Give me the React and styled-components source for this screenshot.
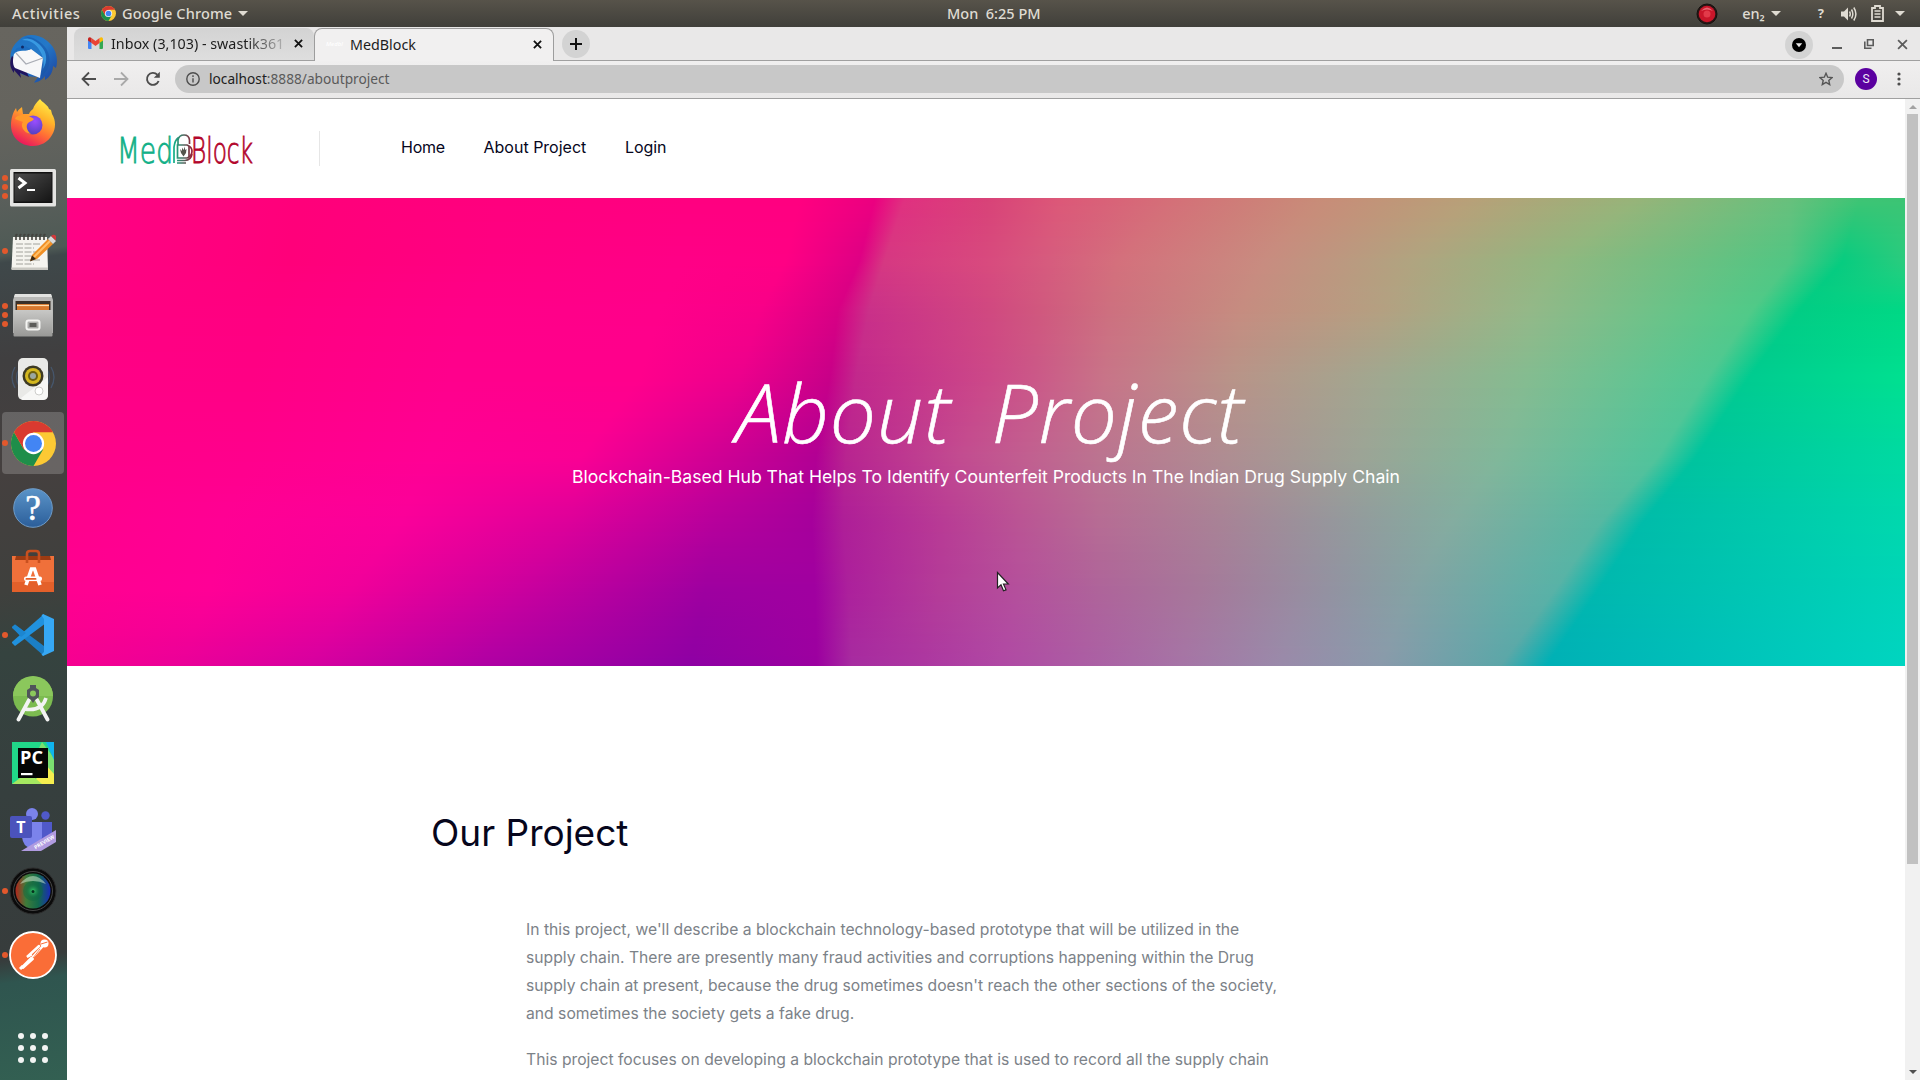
import React from "react";
import styled, { createGlobalStyle } from "styled-components";

const GlobalStyle = createGlobalStyle`
  *, *::before, *::after { box-sizing: border-box; }
  html, body { margin: 0; padding: 0; overflow: hidden; }
  svg { display: block; flex: none; }
`;

const systemFont = `"Noto Sans", "Open Sans", sans-serif`;
const siteFont = `Inter, Roboto, "Liberation Sans", sans-serif`;

/* ---------- desktop ---------- */

const Desktop = styled.div`
  width: 1920px;
  height: 1080px;
  overflow: hidden;
  display: flex;
  flex-direction: column;
  font-family: ${systemFont};
  background: #fff;
`;

const TopBar = styled.header`
  flex: none;
  height: 27px;
  display: grid;
  grid-template-columns: 947px 1fr auto;
  align-items: center;
  background: linear-gradient(#57534a, #403f3a);
  color: #dfdbd2;
  font-size: 14.5px;
  font-weight: 500;
  line-height: 27px;
  white-space: pre;
`;

const TopLeft = styled.div`
  display: flex;
  align-items: center;
  padding-left: 12px;
`;

const Activities = styled.span`
  width: 89px;
  letter-spacing: 0.6px;
`;

const AppName = styled.span`
  margin: 0 6px 0 6px;
  letter-spacing: 0.15px;
`;

const TopRight = styled.div`
  display: flex;
  align-items: center;
  padding-right: 15px;
`;

const Language = styled.span`
  margin: 0 6px 0 24px;
`;

const HelpMark = styled.span`
  margin: 0 17px 0 37px;
  font-size: 13px;
  font-weight: 700;
`;

const Caret = styled.span`
  width: 0;
  height: 0;
  border: 5px solid transparent;
  border-top-color: #dfdbd2;
  border-bottom: 0;
`;

const Gap = styled.span`
  width: ${(p) => p.$w}px;
`;

const Workspace = styled.div`
  flex: 1;
  min-height: 0;
  display: flex;
`;

/* ---------- dock ---------- */

const DockBar = styled.nav`
  flex: none;
  width: 67px;
  display: flex;
  flex-direction: column;
  background: linear-gradient(
    172deg,
    #67655f 0,
    #65645e 90px,
    #5a5f5b 170px,
    #4e5a55 226px,
    #3f484a 234px,
    #403f40 330px,
    #45403f 440px,
    #3f403d 560px,
    #35433f 620px,
    #363f3e 760px,
    #373c3c 925px,
    #2f554f 948px,
    #336052 1053px
  );
`;

const DockSlot = styled.div`
  flex: none;
  height: 64px;
  display: grid;
  grid-template-columns: 11px 44px;
  align-items: center;
`;

const DockTile = styled.div`
  width: 62px;
  height: 62px;
  margin-left: -9px;
  padding-top: ${(p) => p.$drop || 0}px;
  display: grid;
  place-items: center;
  border-radius: 4px;
  background: ${(p) => (p.$active ? "rgba(255,255,255,0.19)" : "none")};
`;

const Dots = styled.div`
  display: flex;
  flex-direction: column;
  align-items: center;
  gap: 2.6px;
  width: 10px;
  z-index: 1;
`;

const Dot = styled.i`
  width: 6px;
  height: 6px;
  border-radius: 50%;
  background: #e2582c;
`;

const AppGrid = styled.div`
  display: grid;
  grid-template-columns: repeat(3, 6px);
  gap: 6px;
  padding: 45.5px 0 0 18px;
`;

const GridDot = styled.i`
  width: 6px;
  height: 6px;
  border-radius: 50%;
  background: #f2f4f3;
`;

/* ---------- browser window ---------- */

const Browser = styled.section`
  flex: 1;
  min-width: 0;
  display: flex;
  flex-direction: column;
`;

const TabStrip = styled.div`
  flex: none;
  height: 34px;
  display: flex;
  align-items: stretch;
  padding: 1px 12px 0 7px;
  background: #e9e8e8;
  border-bottom: 1px solid #a0a0a0;
  color: #1d1d1d;
`;

const Tab = styled.div`
  width: ${(p) => p.$w}px;
  height: ${(p) => (p.$active ? 33 : 32)}px;
  display: flex;
  align-items: center;
  padding: 0 ${(p) => (p.$active ? 11 : 11)}px 2px ${(p) => (p.$active ? 11 : 14)}px;
  border-radius: 8px 8px 0 0;
  background: ${(p) => (p.$active ? "#f1f0f0" : "linear-gradient(#d3d3d3, #dedede)")};
  border: ${(p) => (p.$active ? "1px solid #9d9d9d" : "0 solid")};
  border-bottom: 0;
  font-size: 14.3px;
`;

const TabTitle = styled.span`
  flex: 1;
  min-width: 0;
  overflow: hidden;
  white-space: nowrap;
  padding-left: ${(p) => p.$indent}px;
  ${(p) => p.$fade && "mask-image: linear-gradient(90deg, #000 78%, rgba(0,0,0,.2) 99%);"}
`;

const FavText = styled.span`
  width: 14px;
  font: italic 500 6px ${systemFont};
  color: #fff;
`;

const RoundButton = styled.span`
  width: ${(p) => p.$size}px;
  height: ${(p) => p.$size}px;
  border-radius: 50%;
  background: #d3d3d3;
  display: grid;
  place-items: center;
  margin: 2px 0 0 ${(p) => p.$left}px;
`;

const WindowControls = styled.div`
  margin-left: auto;
  display: flex;
  align-items: center;
`;

const Toolbar = styled.div`
  flex: none;
  height: 38px;
  display: flex;
  align-items: center;
  padding: 0 16px 1px 14px;
  background: linear-gradient(#f0efef, #e9e8e8);
  border-bottom: 1px solid #a0a0a0;
`;

const Omnibox = styled.div`
  flex: 1;
  height: 28px;
  margin-left: 14px;
  display: flex;
  align-items: center;
  padding: 0 11px;
  border-radius: 14px;
  background: #c8c8c8;
`;

const Url = styled.span`
  flex: 1;
  padding-left: 9px;
  font-size: 13.7px;
  line-height: 26px;
  color: #5a5a5a;

  b { font-weight: 400; color: #202020; }
`;

const Avatar = styled.span`
  width: 22px;
  height: 22px;
  margin: 0 20px 0 11px;
  border-radius: 50%;
  background: #5b00a0;
  color: #f0e6f8;
  display: grid;
  place-items: center;
  font: 400 12px Roboto, sans-serif;
`;

const Viewport = styled.div`
  flex: 1;
  min-height: 0;
  display: flex;
`;

const Page = styled.main`
  width: 1838px;
  overflow: hidden;
  display: flex;
  flex-direction: column;
  background: #fff;
  font-family: ${siteFont};
`;

const ScrollTrack = styled.div`
  width: 15px;
  display: flex;
  flex-direction: column;
  align-items: center;
  justify-content: space-between;
  background: #f1f1f1;
  padding: 6px 0 6px;
`;

const ScrollTop = styled.div`
  display: flex;
  flex-direction: column;
  align-items: center;
  gap: 5px;
`;

const ScrollArrow = styled.i`
  border: 4px solid transparent;
  ${(p) => (p.$down ? "border-top-color: #505050; border-bottom: 0;" : "border-bottom-color: #a3a3a3; border-top: 0;")}
`;

const ScrollThumb = styled.div`
  width: 11px;
  height: 750px;
  background: #c1c1c1;
`;

/* ---------- site ---------- */

const SiteHeader = styled.div`
  flex: none;
  height: 99px;
  display: flex;
  align-items: center;
  padding: 0 0 2px 53px;
`;

const Divider = styled.i`
  width: 1px;
  height: 35px;
  margin: 2px 81px 0 66px;
  background: #e6e6e6;
`;

const NavLinks = styled.div`
  display: flex;
  gap: 38.7px;
  padding-bottom: 2px;
  font-size: 16px;
  line-height: 24px;
  color: #06061c;
`;

const NavLink = styled.a`
  letter-spacing: ${(p) => p.$track}px;
`;

const Hero = styled.div`
  flex: none;
  height: 468px;
  display: grid;
  grid-template: 468px / 1838px;

  & > * { grid-area: 1 / 1; }
`;

const HeroCopy = styled.div`
  display: flex;
  flex-direction: column;
  align-items: center;
  padding-top: 163px;
  color: #fff;
  z-index: 1;
`;

const HeroTitle = styled.h1`
  margin: 0;
  padding-left: 8px;
  font: italic 300 82px/100px "Open Sans", Lato, sans-serif;
  word-spacing: 18px;
  letter-spacing: 1px;
  -webkit-text-stroke: 0.6px #fff;
`;

const HeroText = styled.p`
  margin: 2px 0 0;
  font-size: 17.6px;
  line-height: 28px;
`;

const Content = styled.div`
  padding: 140px 0 0 364px;
`;

const SectionTitle = styled.h2`
  margin: 0 0 56px;
  font-size: 37px;
  font-weight: 400;
  line-height: 54px;
  color: #06061c;
`;

const Paragraph = styled.p`
  margin: 0 0 18px 95px;
  font-size: 15.7px;
  line-height: 28px;
  color: #7c8288;
`;

const Line = styled.span`
  display: block;
  white-space: nowrap;
`;

const Pointer = styled.svg`
  position: absolute;
  left: 996px;
  top: 571px;
`;

/* ---------- hero artwork: colour mesh, one row of control points per height ---------- */

const mesh = [
  [198, "67 ff0084,300 ff007a,500 ff007e,690 ff0080,800 ff0080,875 ec0080,905 e03080,987 d84278,1060 dc5878,1176 d47078,1320 c88c78,1470 b8a078,1640 96b479,1790 68c07c,1860 40c474,1905 3cc474"],
  [262, "67 ff0084,290 ff007a,490 ff0082,680 ff0086,785 ff0084,859 de0084,884 d63882,987 d84a7e,1050 d65c7e,1117 d4707c,1264 c88c80,1411 b0a480,1558 90b880,1790 50c683,1842 06cc80,1905 2acc7e"],
  [310, "67 ff0082,270 ff0080,470 ff0088,660 ff008a,760 f80088,838 d80084,869 ca3089,987 d04880,1040 d0587e,1110 cd707f,1240 c68c80,1381 b4a081,1528 94b888,1752 50ca88,1799 02cd84,1905 00d885"],
  [377, "67 ff0086,250 ff0084,450 ff008c,640 ff008c,740 ec008c,830 c80088,856 c2288c,987 cc4888,1035 cb5888,1105 c87488,1235 b89488,1381 a0a890,1528 84bc90,1708 50c893,1749 00cc90,1905 00e090"],
  [457, "67 ff0088,250 ff008c,430 ff0094,580 fa0094,715 d00094,816 b20094,846 b82490,960 c24c90,1030 c16090,1100 bb7490,1230 ae8e92,1360 9ca496,1500 80b89a,1658 50c49b,1696 00c49e,1905 00daa2"],
  [523, "67 ff008c,220 ff0094,400 fa009a,570 dc009a,715 b6009c,812 a6009c,843 ae1e98,940 b83a95,1020 ba5494,1100 b66c94,1220 a88296,1330 96969c,1450 84aca0,1600 56b8a2,1642 00bcaa,1905 00d8ae"],
  [590, "67 ff0090,210 ff0096,350 f0009a,520 ca009e,705 9e00a0,815 a000a0,848 ac209c,940 b43c98,1020 b4509c,1100 ae649a,1200 a6789a,1300 988ca0,1411 84a2a4,1555 58b2a7,1598 00b8af,1905 00d5b8"],
  [666, "67 f60090,180 ea0098,310 d600a0,480 b000a4,690 8e00a4,817 9c00a0,852 a72ca0,920 ac36a1,1000 b048a4,1080 ac5ca4,1180 a674a6,1280 9a8aaa,1380 8a9aab,1500 5ca6a8,1546 00b0b6,1905 00d5c0"],
].map(([y, row]) => ({
  y: y - 198,
  points: row.split(",").map((s) => {
    const [x, hex] = s.split(" ");
    return { x: +x - 67, c: [0, 2, 4].map((i) => parseInt(hex.slice(i, i + 2), 16)) };
  }),
}));

const STRIP = 2;
const mix = (a, b, t) => a + (b - a) * t;

const strips = Array.from({ length: 468 / STRIP }, (_, n) => {
  const y = n * STRIP;
  const mid = y + STRIP / 2;
  const i = Math.max(1, mesh.findIndex((r) => r.y >= mid));
  const a = mesh[i - 1];
  const b = mesh[i];
  const t = (mid - a.y) / (b.y - a.y);
  return {
    y,
    stops: a.points.map((p, k) => ({
      at: mix(p.x, b.points[k].x, t) / 1838,
      color: `rgb(${p.c.map((v, j) => Math.round(mix(v, b.points[k].c[j], t))).join(",")})`,
    })),
  };
});

const HeroArt = () => (
  <svg width="1838" height="468" viewBox="0 0 1838 468" shapeRendering="crispEdges">
    <defs>
      {strips.map((s) => (
        <linearGradient id={`strip${s.y}`} key={s.y}>
          {s.stops.map((p, k) => (
            <stop key={k} offset={p.at} stopColor={p.color} />
          ))}
        </linearGradient>
      ))}
    </defs>
    {strips.map((s) => (
      <rect key={s.y} y={s.y} width="1838" height={STRIP} fill={`url(#strip${s.y})`} />
    ))}
  </svg>
);

/* ---------- icons ---------- */

const ChromeIcon = ({ size }) => (
  <svg width={size} height={size} viewBox="0 0 44 44">
    <circle cx="22" cy="22" r="22" fill="#fcc934" />
    <path d="M2.95 11 A22 22 0 0 0 22 44 L31.5 27.5 L12.5 27.5 Z" fill="#1e8e4a" />
    <path d="M2.95 11 A22 22 0 0 1 41.05 11 H22 L12.5 27.5 Z" fill="#d93a30" />
    <circle cx="22" cy="22" r="10.4" fill="#fff" />
    <circle cx="22" cy="22" r="8.3" fill="#4285f4" />
  </svg>
);

const Thunderbird = () => (
  <svg width="48" height="50" viewBox="0 0 48 50">
    <defs>
      <linearGradient id="tb" x1="0" y1="0" x2="1" y2="1">
        <stop offset="0" stopColor="#1d72c4" />
        <stop offset=".5" stopColor="#2478c8" />
        <stop offset="1" stopColor="#1a3f9c" />
      </linearGradient>
    </defs>
    <path d="M10 6 C16 -1 29 0 37 6 C46 12 50 24 47 34 L44 32 C44 38 41 43 36 46 L36 42 C33 46 29 48.500 25 48.500 L29 43 C18 43 6 40 3 30 C-1 21 3 12 10 6Z" fill="url(#tb)" />
    <path d="M3 22 C0 28 1 34 5 39 L5 36 L12 44 L11 39 L20 43 L14 30Z" fill="#20145e" />
    <path d="M5 20 C9 15 18 18 22 15 L34 24 L31 44 L6 34 C3 30 4 24 5 20Z" fill="#f7f7f8" />
    <path d="M7 19 L17 30 L34 24" fill="none" stroke="#a9acb4" strokeWidth="1.2" />
    <path d="M15 3 C22 4 29 9 32 16 C36 25 35 36 31 43 C41 37 44 24 36 13 C30 6 22 2 15 3Z" fill="#1556a8" opacity=".55" />
    <path d="M13 6 C20 6 27 9 31 17 C35 24 35 30 34 35 C39 27 38 18 32 12 C26 6 20 3 13 6Z" fill="#3fa4ea" opacity=".8" />
    <path d="M4 19 C8 17 9 15 13 16 C17 17 20 16 22 15 L16 12 L8 14Z" fill="#1d6dc0" />
    <circle cx="13.5" cy="13" r="1.5" fill="#102a66" />
  </svg>
);

const Firefox = () => (
  <svg width="46" height="48" viewBox="0 0 46 48">
    <defs>
      <linearGradient id="ff" x1=".8" y1="0" x2=".3" y2="1">
        <stop offset="0" stopColor="#fff14a" />
        <stop offset=".35" stopColor="#ffb52a" />
        <stop offset=".65" stopColor="#ff6a36" />
        <stop offset="1" stopColor="#e8145f" />
      </linearGradient>
      <radialGradient id="ffp" cx=".6" cy=".3" r=".8">
        <stop offset="0" stopColor="#9a4dff" />
        <stop offset="1" stopColor="#4a3fb8" />
      </radialGradient>
    </defs>
    <path d="M30 0 C33 4 38 6 39 10 L41 11 L42 15 C46 21 46 30 42 36 C38 43 31 47 23 47 C10 47 1 38 1 26 C1 20 3 13 6 9 L7 13 C9 10 11 9 12 8 L13 15 C15 15 17 15 19 15 C20 12 22 11 23 10 C24 6 27 3 30 0Z" fill="url(#ff)" />
    <circle cx="23" cy="26" r="9.5" fill="url(#ffp)" />
    <path d="M6 18 C12 14 18 16 24 20 C22 22.500 20 22 18 24 C16 26 16 31 21 35 C13 34 10 26 13 23 L5 20Z" fill="#ff9a2a" />
  </svg>
);

const Terminal = () => (
  <svg width="46" height="38" viewBox="0 0 46 38">
    <defs>
      <linearGradient id="term" x1="0" y1="0" x2="1" y2="1">
        <stop offset="0" stopColor="#4c4c4c" />
        <stop offset="1" stopColor="#151515" />
      </linearGradient>
    </defs>
    <rect width="46" height="37.5" rx="1.5" fill="#e4e4e2" />
    <rect x="3.5" y="3" width="39" height="31" fill="#111" />
    <rect x="4.5" y="4.5" width="37" height="28" fill="url(#term)" />
    <path d="M8.5 9 L15 14 L8.5 19" fill="none" stroke="#fff" strokeWidth="3" />
    <path d="M17 21 H25" stroke="#fff" strokeWidth="2" />
  </svg>
);

const Notes = () => (
  <svg width="46" height="40" viewBox="0 0 46 40">
    <path d="M3 6 H37 L38 38 H1.5Z" fill="#f5f4ef" />
    <path d="M1.5 36.5 H38 V39 H1.5Z" fill="#c9c8c2" />
    {[6, 10, 14, 18, 22, 26, 30, 34].map((x) => (
      <path key={x} d={`M${x} 9 V4.5 Q${x} 3 ${x + 1.5} 4`} stroke="#44443f" strokeWidth="1.6" fill="none" />
    ))}
    {[13, 17, 21, 25, 29, 33].map((y) => (
      <path key={y} d={`M6 ${y} H${y % 8 === 5 ? 30 : 24}`} stroke="#a2a29c" strokeWidth="1" strokeDasharray="7 1.5" />
    ))}
    <path d="M20 30 L22 24 L38 8 L43 13 L27 28Z" fill="#f08f25" />
    <path d="M24 26 L40 10" stroke="#ffc069" strokeWidth="2" />
    <path d="M38 8 L41 5 L46 10 L43 13Z" fill="#d9d9d9" />
    <path d="M41 5 Q44 2.5 46 5 V9.5Z" fill="#d3393b" />
    <path d="M20 30.500 L22 24.500 L26 28Z" fill="#3b2a18" />
  </svg>
);

const Files = () => (
  <svg width="42" height="44" viewBox="0 0 42 44">
    <defs>
      <linearGradient id="cab" x1="0" y1="0" x2="0" y2="1">
        <stop offset="0" stopColor="#c8c8c6" />
        <stop offset="1" stopColor="#989896" />
      </linearGradient>
    </defs>
    <path d="M3 1 H39 L41 7 V40 H1 V7Z" fill="#b8b8b6" />
    <path d="M3 1 H39 L40 4 H2Z" fill="#e2e2e0" />
    <rect x="3.500" y="8" width="35" height="11" fill="#3a3028" />
    <rect x="5" y="11" width="32" height="6" fill="#d9782d" />
    <path d="M5 12.500 H37" stroke="#ffdcae" strokeWidth="1.200" />
    <rect x="1.500" y="17" width="39" height="26.500" rx="1" fill="url(#cab)" />
    <rect x="14.500" y="27.500" width="13" height="9" rx="2" fill="none" stroke="#f4f4f2" strokeWidth="2" />
    <rect x="17.500" y="30" width="7" height="4" fill="#5c5c5a" />
  </svg>
);

const Speaker = () => (
  <svg width="46" height="44" viewBox="0 0 46 44">
    <path d="M5 10 Q-1 20 5 31 M9 12 Q4 20 9 29 M41 10 Q47 20 41 31 M37 12 Q42 20 37 29" stroke="#46566b" strokeWidth="1.300" fill="none" />
    <rect x="8" y="1" width="30" height="42" rx="5" fill="#e9e9e7" />
    <path d="M11 41 L38 20 V38 Q38 43 33 43 H12Z" fill="#fafafa" opacity=".8" />
    <circle cx="23" cy="19" r="10.500" fill="#3d3a24" />
    <circle cx="23" cy="19" r="8" fill="#d3b71f" />
    <circle cx="23" cy="19" r="5" fill="#6d6011" />
    <circle cx="23" cy="19" r="3" fill="#9ba7a0" />
    <circle cx="29" cy="34" r="4" fill="#fff" stroke="#cdcdcb" />
  </svg>
);

const HelpIcon = () => (
  <svg width="40" height="40" viewBox="0 0 40 40">
    <defs>
      <linearGradient id="hlp" x1="0" y1="0" x2="0" y2="1">
        <stop offset="0" stopColor="#5b94c8" />
        <stop offset="1" stopColor="#2b5e9a" />
      </linearGradient>
    </defs>
    <circle cx="20" cy="20" r="19.300" fill="url(#hlp)" stroke="#6f9cc8" />
    <text x="20" y="32" textAnchor="middle" fontFamily="Liberation Serif, serif" fontSize="35" fill="#fff" stroke="#fff" strokeWidth=".6">?</text>
  </svg>
);

const Software = () => (
  <svg width="42" height="44" viewBox="0 0 42 44">
    <path d="M3 7 H39 V12 H3Z" fill="#9c3b12" />
    <path d="M0 7 L4 7 L3 11 H39 L38 7 H42 V43 H0Z" fill="#f0703a" />
    <path d="M0 33 H42 V43 H0Z" fill="#e4602a" />
    <path d="M15 14 V5 Q15 2 18 2 H24 Q27 2 27 5 V14" fill="none" stroke="#c9501f" strokeWidth="2.600" />
    <path d="M14 36 L19.500 20 H22.500 L28 36" fill="none" stroke="#fff" strokeWidth="3.600" />
    <rect x="12" y="27.500" width="18" height="4.600" rx="2" fill="#fff" />
    <rect x="13.500" y="29" width="11" height="1.800" rx=".9" fill="#e4602a" />
  </svg>
);

const VSCode = () => (
  <svg width="42" height="42" viewBox="0 0 42 42">
    <path d="M0 13 L3 10.500 L32 32 V42 L0 14Z" fill="#1b7fc6" />
    <path d="M0 29 L3 32 L32 10.500 V0 L0 28Z" fill="#2192de" />
    <path d="M0 13 L3 10.500 L14 19 L9 23Z" fill="#1c86d0" />
    <path d="M31 0 L42 5 V37 L31 42 L29.500 40.500 L32 38 V5 L29.500 1.500Z" fill="#36a8f4" />
  </svg>
);

const AndroidStudio = () => (
  <svg width="42" height="46" viewBox="0 0 42 46">
    <circle cx="21" cy="20.500" r="20" fill="#7cbb50" />
    <path d="M1 20 A20 20 0 0 1 41 20Z" fill="#8bc75c" />
    <path d="M17 24 L6.500 43.500 M25 24 L35.500 43.500" stroke="#f3f3f3" strokeWidth="3.800" strokeLinecap="round" />
    <path d="M12 33 Q30 36 34 22" stroke="#f3f3f3" strokeWidth="3.600" fill="none" />
    <path d="M18 9 H24 V12 L27 14 V21 L23 24 L21 27 L19 24 L15 21 V14 L18 12Z" fill="#50545a" />
    <circle cx="21" cy="17.500" r="3" fill="#8bc75c" />
  </svg>
);

const PyCharm = () => (
  <svg width="42" height="42" viewBox="0 0 42 42">
    <rect width="42" height="42" fill="#21d789" />
    <path d="M20 42 L42 14 V42Z" fill="#f6ee4f" />
    <path d="M0 42 L16 30 L30 42Z" fill="#a5e861" />
    <path d="M30 0 L42 16 V32 L24 12Z" fill="#7be070" />
    <path d="M34 0 H42 V18Z" fill="#0fb4ee" />
    <rect x="6" y="6" width="30" height="30" fill="#050505" />
    <text x="8" y="22" fontFamily="Open Sans, sans-serif" fontWeight="700" fontSize="17" textLength="23" lengthAdjust="spacingAndGlyphs" fill="#fff">PC</text>
    <rect x="9" y="31" width="11.500" height="2.200" fill="#fff" />
  </svg>
);

const Teams = () => (
  <svg width="46" height="44" viewBox="0 0 46 44">
    <circle cx="22" cy="7" r="6" fill="#7b83eb" />
    <circle cx="35.500" cy="8.500" r="4.200" fill="#5059c9" />
    <path d="M28 15 H42 V28 Q42 36 33 36 H28Z" fill="#5059c9" />
    <path d="M12 15 H32 V30 Q31 41 21 41 Q13 40 12 30Z" fill="#7b83eb" />
    <rect y="9" width="22" height="22" rx="2" fill="#4b53bc" />
    <text x="11" y="26" textAnchor="middle" fontFamily="Open Sans, sans-serif" fontWeight="700" fontSize="16" fill="#fff">T</text>
    <path d="M11 44 L46 23 V35 L31 44Z" fill="#b09be0" />
    <text transform="translate(25.500 42.500) rotate(-31)" fontFamily="Open Sans, sans-serif" fontWeight="700" fontSize="5.200" fill="#fff">PREVIEW</text>
  </svg>
);

const Webcam = () => (
  <svg width="48" height="48" viewBox="0 0 48 48">
    <defs>
      <linearGradient id="lens" x1="0" y1=".5" x2="1" y2=".5">
        <stop offset="0" stopColor="#b3261c" />
        <stop offset=".3" stopColor="#3e7c3a" />
        <stop offset=".65" stopColor="#126a4c" />
        <stop offset="1" stopColor="#1a2bb8" />
      </linearGradient>
      <radialGradient id="lensGlow">
        <stop offset="0" stopColor="#37d06a" />
        <stop offset="1" stopColor="#0d6040" stopOpacity="0" />
      </radialGradient>
    </defs>
    <circle cx="24" cy="24" r="23" fill="#0b0b0b" stroke="#2b2b2b" />
    <circle cx="24" cy="24" r="19.500" fill="none" stroke="#464646" />
    <circle cx="24" cy="24" r="17.500" fill="url(#lens)" />
    <circle cx="24" cy="24" r="10" fill="#0c6a43" opacity=".45" />
    <circle cx="24" cy="24" r="8" fill="url(#lensGlow)" />
    <path d="M11 17 Q24 1 37 17 Q24 11 11 17Z" fill="#d8f0d8" opacity=".5" />
    <circle cx="24" cy="24.500" r="1.500" fill="#06301e" />
  </svg>
);

const Postman = () => (
  <svg width="48" height="48" viewBox="0 0 48 48">
    <circle cx="24" cy="24" r="23" fill="#fa6d37" stroke="#fff" strokeWidth="1.800" />
    <circle cx="35.500" cy="12.500" r="4" fill="#fff" />
    <path d="M32 13 L38.500 11" stroke="#fa6d37" strokeWidth="1" />
    <path d="M33 16 L21 29 M30 15 L18 26 L22 24" stroke="#fff" strokeWidth="2.400" fill="none" strokeLinecap="round" />
    <path d="M31 18 L24 27" stroke="#fa6d37" strokeWidth=".8" />
    <path d="M22 27 L12 37 M24 28 L14 37" stroke="#fff" strokeWidth="2" fill="none" strokeLinecap="round" />
    <path d="M14 35 L11 38" stroke="#fff" strokeWidth="3" />
  </svg>
);

const dockItems = [
  { icon: <Thunderbird />, dots: 0 },
  { icon: <Firefox />, dots: 0 },
  { icon: <Terminal />, dots: 3, drop: 2 },
  { icon: <Notes />, dots: 1 },
  { icon: <Files />, dots: 3 },
  { icon: <Speaker />, dots: 0 },
  { icon: <ChromeIcon size={45} />, dots: 1, active: true },
  { icon: <HelpIcon />, dots: 0, drop: 2 },
  { icon: <Software />, dots: 0 },
  { icon: <VSCode />, dots: 1 },
  { icon: <AndroidStudio />, dots: 0 },
  { icon: <PyCharm />, dots: 0 },
  { icon: <Teams />, dots: 0, drop: 4 },
  { icon: <Webcam />, dots: 1 },
  { icon: <Postman />, dots: 1 },
];

const Gmail = () => (
  <svg width="15" height="12" viewBox="0 0 15 12">
    <path d="M0 2 V11 Q0 12 1 12 H3.500 V4.500Z" fill="#4285f4" />
    <path d="M15 2 V11 Q15 12 14 12 H11.500 V4.500Z" fill="#34a853" />
    <path d="M11.500 1 L13 .2 Q15 0 15 2 V3.500 L11.500 6Z" fill="#fbbc04" />
    <path d="M3.500 1 L7.500 4 L11.500 1 V6 L7.500 9 L3.500 6Z" fill="#ea4335" />
    <path d="M3.500 1 L2 .2 Q0 0 0 2 V3.500 L3.500 6Z" fill="#c5221f" />
  </svg>
);

const Cross = ({ size, color, width = 2 }) => (
  <svg width={size} height={size} viewBox="0 0 10 10">
    <path d="M1 1 L9 9 M9 1 L1 9" stroke={color} strokeWidth={width} />
  </svg>
);

const Logo = () => (
  <svg width="133" height="34" viewBox="0 0 133 34" overflow="visible">
    <defs>
      <linearGradient id="lockFill" x1="54" x2="75" y1="0" y2="0" gradientUnits="userSpaceOnUse">
        <stop offset="0" stopColor="#12b088" />
        <stop offset=".5" stopColor="#54605a" />
        <stop offset="1" stopColor="#b3062c" />
      </linearGradient>
    </defs>
    <g fontFamily="DejaVu Sans Light, DejaVu Sans, sans-serif" fontWeight="200" fontSize="36" strokeWidth=".9">
      <text x="-3" y="32" textLength="56" lengthAdjust="spacingAndGlyphs" fill="#12b088" stroke="#12b088">Med</text>
      <text x="71" y="32" textLength="62" lengthAdjust="spacingAndGlyphs" fill="#b3062c" stroke="#b3062c">Block</text>
    </g>
    <g fill="none" stroke="url(#lockFill)" strokeWidth="1.700">
      <path d="M54 32 V16 Q55 9 58 7 V14 M58 14 V9 Q59 4 64 4 Q69 4 69.500 9 V13" />
      <path d="M57.500 14 H67 Q72 16 72 20 Q72 25 67 27 H57.500Z" />
      <path d="M57 29.500 H65 Q71 29 72 23 M57 32 H66 M69 15 V26" />
    </g>
    <path d="M60 18 L62 20 V16.500 L63.500 19 L65 15.500 V19 L66.500 18 L66 22 L63.500 25.500 L61 22Z" fill="#54544c" />
  </svg>
);

export default function App() {
  return (
    <Desktop>
      <GlobalStyle />
      <TopBar>
        <TopLeft>
          <Activities>Activities</Activities>
          <ChromeIcon size={15} />
          <AppName>Google Chrome</AppName>
          <Caret />
        </TopLeft>
        <span>Mon  6:25 PM</span>
        <TopRight>
          <svg width="22" height="22" viewBox="0 0 22 22">
            <circle cx="11" cy="11" r="10" fill="#2a1413" stroke="#151210" />
            <circle cx="11" cy="11" r="8.300" fill="#c9162a" />
            <path d="M5 8 Q11 1 17 8 Q11 5 5 8Z" fill="#f08a90" opacity=".7" />
            <circle cx="11" cy="11" r="3.500" fill="#e23a4a" />
          </svg>
          <Language>en₂</Language>
          <Caret />
          <HelpMark>?</HelpMark>
          <svg width="16" height="16" viewBox="0 0 16 16" fill="none" stroke="#dfdbd2" strokeWidth="1.500">
            <path d="M0 5.500 H3 L7 1.500 V14.500 L3 10.500 H0Z" fill="#dfdbd2" stroke="none" />
            <path d="M8.500 5.500 Q10 8 8.500 10.500 M10.500 3.500 Q13.200 8 10.500 12.500 M12.800 1.500 Q17 8 12.800 14.500" />
          </svg>
          <Gap $w={14} />
          <svg width="13" height="17" viewBox="0 0 13 17" fill="none" stroke="#dfdbd2">
            <path d="M1 3 H4 V1 H9 V3 H12 V16 H1Z" strokeWidth="1.800" />
            <path d="M3.500 6 H9.500 M3.500 9 H9.500 M3.500 12 H9.500" strokeWidth="1.700" />
          </svg>
          <Gap $w={11} />
          <Caret />
        </TopRight>
      </TopBar>

      <Workspace>
        <DockBar>
          {dockItems.map((item, i) => (
            <DockSlot key={i}>
              <Dots>
                {Array.from({ length: item.dots }, (_, k) => (
                  <Dot key={k} />
                ))}
              </Dots>
              <DockTile $active={item.active} $drop={item.drop}>{item.icon}</DockTile>
            </DockSlot>
          ))}
          <AppGrid>
            {Array.from({ length: 9 }, (_, k) => (
              <GridDot key={k} />
            ))}
          </AppGrid>
        </DockBar>

        <Browser>
          <TabStrip>
            <Tab $w={240}>
              <Gmail />
              <TabTitle $indent={8} $fade>Inbox (3,103) - swastik361</TabTitle>
              <Gap $w={9} />
              <Cross size={9} color="#111" />
            </Tab>
            <Tab $active $w={240}>
              <FavText>Medbl</FavText>
              <TabTitle $indent={10}>MedBlock</TabTitle>
              <Cross size={9} color="#111" />
            </Tab>
            <RoundButton $size={28} $left={8}>
              <svg width="12" height="12" viewBox="0 0 12 12">
                <path d="M6 0 V12 M0 6 H12" stroke="#111" strokeWidth="2" />
              </svg>
            </RoundButton>
            <WindowControls>
              <RoundButton $size={28} $left={0}>
                <svg width="14" height="14" viewBox="0 0 14 14">
                  <circle cx="7" cy="7" r="7" fill="#000" />
                  <path d="M3.800 5.300 H10.200 L7 9.300Z" fill="#e9e8e8" />
                </svg>
              </RoundButton>
              <Gap $w={19} />
              <svg width="10" height="12" viewBox="0 0 10 12">
                <path d="M0 10 H10" stroke="#5c5c5c" strokeWidth="2" />
              </svg>
              <Gap $w={22} />
              <svg width="10" height="10" viewBox="0 0 10 10" fill="none" stroke="#5c5c5c" strokeWidth="1.600">
                <path d="M3.500 .8 H9.200 V6.500 H3.500Z M.8 2.500 V9.200 H7.500" />
              </svg>
              <Gap $w={23} />
              <Cross size={11} color="#5c5c5c" width={1.600} />
            </WindowControls>
          </TabStrip>

          <Toolbar>
            <svg width="16" height="16" viewBox="0 0 16 16" fill="none" stroke="#4d4d4d" strokeWidth="1.800">
              <path d="M15 8 H2 M8 1.500 L1.500 8 L8 14.500" />
            </svg>
            <Gap $w={16} />
            <svg width="16" height="16" viewBox="0 0 16 16" fill="none" stroke="#a9a9a9" strokeWidth="1.800">
              <path d="M1 8 H14 M8 1.500 L14.500 8 L8 14.500" />
            </svg>
            <Gap $w={16} />
            <svg width="16" height="16" viewBox="0 0 16 16" fill="none" stroke="#4d4d4d" strokeWidth="1.900">
              <path d="M13.600 10 A6 6 0 1 1 12.300 3.700" />
              <path d="M14.800 .8 V6.800 H8.800Z" fill="#4d4d4d" stroke="none" />
            </svg>
            <Omnibox>
              <svg width="14" height="14" viewBox="0 0 14 14" fill="none" stroke="#4d4d4d" strokeWidth="1.400">
                <circle cx="7" cy="7" r="6.200" />
                <path d="M7 6.300 V10.500 M7 3.300 V5" />
              </svg>
              <Url><b>localhost</b>:8888/aboutproject</Url>
              <svg width="14" height="14" viewBox="0 0 14 14" fill="none" stroke="#555" strokeWidth="1.400">
                <path d="M7 1.300 L8.700 5.200 L13 5.600 L9.800 8.400 L10.700 12.600 L7 10.400 L3.300 12.600 L4.200 8.400 L1 5.600 L5.300 5.200Z" />
              </svg>
            </Omnibox>
            <Avatar>S</Avatar>
            <svg width="4" height="14" viewBox="0 0 4 14" fill="#4d4d4d">
              <circle cx="2" cy="2" r="1.600" />
              <circle cx="2" cy="7" r="1.600" />
              <circle cx="2" cy="12" r="1.600" />
            </svg>
            <Gap $w={3} />
          </Toolbar>

          <Viewport>
            <Page>
              <SiteHeader>
                <Logo />
                <Divider />
                <NavLinks>
                  <NavLink $track={-0.25}>Home</NavLink>
                  <NavLink $track={0}>About Project</NavLink>
                  <NavLink $track={-0.1}>Login</NavLink>
                </NavLinks>
              </SiteHeader>
              <Hero>
                <HeroArt />
                <HeroCopy>
                  <HeroTitle>About Project</HeroTitle>
                  <HeroText>
                    Blockchain-Based Hub That Helps To Identify Counterfeit Products In The Indian Drug Supply Chain
                  </HeroText>
                </HeroCopy>
              </Hero>
              <Content>
                <SectionTitle>Our Project</SectionTitle>
                <Paragraph>
                  <Line>In this project, we'll describe a blockchain technology-based prototype that will be utilized in the</Line>
                  <Line>supply chain. There are presently many fraud activities and corruptions happening within the Drug</Line>
                  <Line>supply chain at present, because the drug sometimes doesn't reach the other sections of the society,</Line>
                  <Line>and sometimes the society gets a fake drug.</Line>
                </Paragraph>
                <Paragraph>
                  <Line>This project focuses on developing a blockchain prototype that is used to record all the supply chain</Line>
                </Paragraph>
              </Content>
            </Page>
            <ScrollTrack>
              <ScrollTop>
                <ScrollArrow />
                <ScrollThumb />
              </ScrollTop>
              <ScrollArrow $down />
            </ScrollTrack>
          </Viewport>
        </Browser>
      </Workspace>
      <Pointer width="14" height="22" viewBox="0 0 14 22">
        <path d="M1.500 1.500 V17 L5 13.800 L7.500 19.800 L10 18.800 L7.500 13 H12.300Z" fill="#fff" stroke="#222" strokeWidth="1.200" />
      </Pointer>
    </Desktop>
  );
}
